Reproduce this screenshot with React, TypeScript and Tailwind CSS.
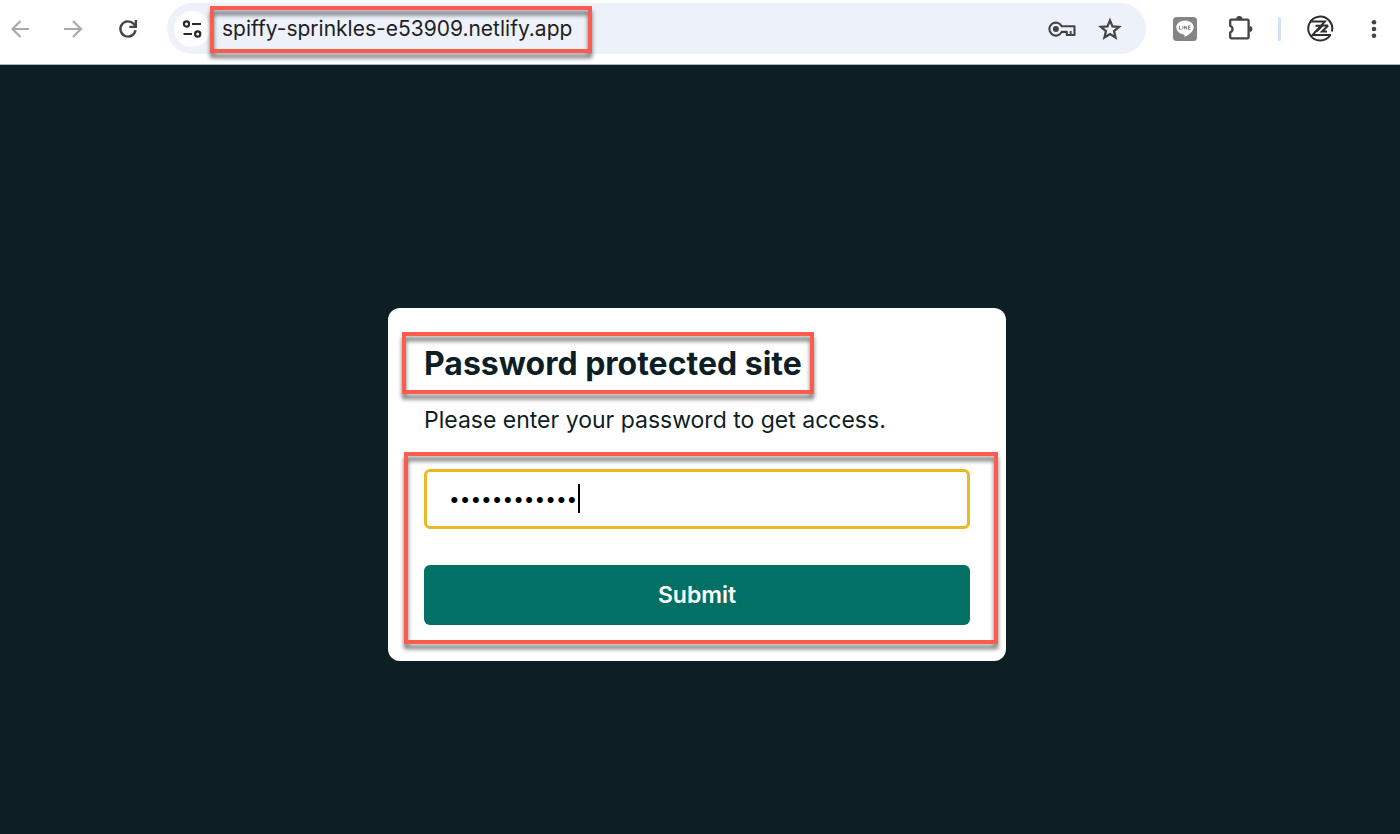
import React, { useState } from 'react';

const NAV_BUTTON = 'flex h-10 w-10 items-center justify-center';

const Highlight: React.FC<{ className: string }> = ({ className }) => (
  <span
    aria-hidden="true"
    className={`pointer-events-none absolute border-4 border-[#fc5c4d] drop-shadow-[0_5px_2px_rgba(0,0,0,0.55)] ${className}`}
  />
);

const BackIcon = () => (
  <svg width="20" height="20" viewBox="0 0 20 20" fill="none" stroke="#a9a9a9" strokeWidth="2.2">
    <path d="M19 10H3M10.500 2L2.500 10l8 8" />
  </svg>
);

const ForwardIcon = () => (
  <svg width="20" height="20" viewBox="0 0 20 20" fill="none" stroke="#a9a9a9" strokeWidth="2.2">
    <path d="M0 10h16.500M9 2l8 8-8 8" />
  </svg>
);

const ReloadIcon = () => (
  <svg width="20" height="20" viewBox="0 0 20 20" fill="none" stroke="#444" strokeWidth="2.400">
    <path d="M17.500 11.300A7.600 7.600 0 1 1 15.500 4.700L17.500 7" />
    <path d="M17.900 1v6.900h-6.500" />
  </svg>
);

const SiteSettingsIcon = () => (
  <svg width="20" height="20" viewBox="0 0 20 20" fill="none" stroke="#26282b" strokeWidth="2.2">
    <circle cx="4.500" cy="5" r="2.600" />
    <path d="M10 5h9M1.500 15h8.500" />
    <circle cx="15.700" cy="15" r="2.600" />
  </svg>
);

const KeyIcon = () => (
  <svg width="28" height="18" viewBox="0 0 28 18" fill="none" stroke="#444" strokeWidth="2.100">
    <path d="M13.700 6.300H26.500V15H18.800V11.900H13.700A6.500 6.500 0 1 1 13.700 6.300z" strokeLinejoin="round" />
    <path d="M22.700 11V15" strokeWidth="1.800" />
    <circle cx="7.900" cy="9.100" r="3" fill="#444" stroke="none" />
  </svg>
);

const StarIcon = () => (
  <svg width="24" height="24" viewBox="0 0 24 24" fill="none" stroke="#444" strokeWidth="2.200">
    <path d="M12 3.300l2.500 6.100 6.600.5-5.100 4.200 1.600 6.400-5.600-3.500-5.600 3.500 1.600-6.400-5.100-4.200 6.600-.5z" />
  </svg>
);

const LineIcon = () => (
  <svg width="24" height="24" viewBox="0 0 24 24">
    <rect width="24" height="24" rx="3.500" fill="#858585" />
    <path d="M12 3.500c-4.900 0-8.700 3.100-8.700 7 0 3.500 3.100 6.400 7.300 6.900 1.200.2.900 1.200.7 2.700 3.500-1.800 9.400-5.200 9.400-9.600 0-3.900-3.900-7-8.700-7z" fill="#fff" />
    <path d="M6.500 8.900v3.400h2M9.900 8.900v3.400M11.500 12.300V8.900l2.200 3.400V8.900M17.500 8.900h-2v3.400h2M15.500 10.600h1.800" fill="none" stroke="#858585" strokeWidth="1" />
  </svg>
);

const ExtensionsIcon = () => (
  <svg width="26" height="26" viewBox="0 0 26 26">
    <path
      d="M4.200 3.700H20.600a1 1 0 0 1 1 1V21.300a1 1 0 0 1-1 1H4.200a1 1 0 0 1-1-1v-4.900a3.500 3.500 0 0 0 0-6.600V4.700a1 1 0 0 1 1-1z"
      fill="none"
      stroke="#444"
      strokeWidth="2.300"
      strokeLinejoin="round"
    />
    <path d="M9.200 3.200a3.100 3.100 0 0 1 6.200 0zM22.400 10a3 3 0 0 1 0 6z" fill="#444" />
  </svg>
);

const ProfileIcon = () => (
  <svg width="28" height="28" viewBox="0 0 28 28" fill="none" stroke="#2f2f2f" strokeWidth="2">
    <path d="M24.200 20.300A12 12 0 1 1 25.900 16.500" />
    <path d="M4 6.600H18.800L6.500 20H25M9.500 10.700h6M22.200 10.500h-5.500L10.500 16.500M22.200 10.500L16 16.500h5" />
  </svg>
);

const MenuIcon = () => (
  <svg width="6" height="20" viewBox="0 0 6 20" fill="#444">
    <circle cx="3" cy="3.200" r="2.300" />
    <circle cx="3" cy="10" r="2.300" />
    <circle cx="3" cy="16.800" r="2.300" />
  </svg>
);

const BrowserBar: React.FC = () => {
  const [url, setUrl] = useState('spiffy-sprinkles-e53909.netlify.app');

  return (
    <header className="flex h-[65px] items-start border-b border-[#b5b8ba] bg-white pt-[3px]">
      <nav className="flex h-[51px] items-center gap-3.5">
        <button type="button" aria-label="Back" className={NAV_BUTTON}><BackIcon /></button>
        <button type="button" aria-label="Forward" className={NAV_BUTTON}><ForwardIcon /></button>
        <button type="button" aria-label="Reload" className={NAV_BUTTON}><ReloadIcon /></button>
      </nav>

      <div className="ml-[19px] flex h-[51px] min-w-0 flex-1 items-center rounded-full bg-[#edf1fa] pr-4 pl-[7px]">
        <button type="button" aria-label="Site information" className="flex h-9 w-9 shrink-0 items-center justify-center rounded-full bg-white">
          <SiteSettingsIcon />
        </button>
        <div className="relative w-[382px]">
          <input
            type="text"
            aria-label="Address"
            value={url}
            onChange={(e) => setUrl(e.target.value)}
            className="block h-12 w-full bg-transparent px-3 text-[21px] text-[#1f2023] outline-none"
          />
          <Highlight className="inset-x-0 top-px bottom-0" />
        </div>
        <div className="ml-auto flex gap-2">
          <button type="button" aria-label="Passwords" className={NAV_BUTTON}><KeyIcon /></button>
          <button type="button" aria-label="Bookmark" className={NAV_BUTTON}><StarIcon /></button>
        </div>
      </div>

      <div className="ml-[19px] flex h-[51px] items-center pr-1.5">
        <button type="button" aria-label="LINE" className={NAV_BUTTON}><LineIcon /></button>
        <button type="button" aria-label="Extensions" className={`ml-[15px] ${NAV_BUTTON}`}><ExtensionsIcon /></button>
        <span className="mr-[19px] ml-[18px] h-6 w-[3px] rounded-full bg-[#d3e2fb]" />
        <button type="button" aria-label="Profile" className={NAV_BUTTON}><ProfileIcon /></button>
        <button type="button" aria-label="Menu" className={`ml-3.5 ${NAV_BUTTON}`}><MenuIcon /></button>
      </div>
    </header>
  );
};

const PasswordCard: React.FC = () => {
  const [password, setPassword] = useState('sprinkles123');

  return (
    <section className="w-full max-w-[618px] rounded-xl bg-white p-9 text-[#0e1e25]">
      <div className="relative w-fit">
        <h1 className="text-[32px] leading-10 font-bold">Password protected site</h1>
        <Highlight className="-top-3 -right-3 -bottom-2.5 -left-[22px]" />
      </div>
      <p className="mt-[17px] text-[23px] leading-[38px]">Please enter your password to get access.</p>

      <form className="relative mt-[30px] flex flex-col gap-9" onSubmit={(e) => e.preventDefault()}>
        <div className="relative">
          <input
            type="password"
            aria-label="Password"
            value={password}
            onChange={(e) => setPassword(e.target.value)}
            className="block h-[60px] w-full rounded-md border-[3px] border-[#e9b824] px-[22px] text-[19px] text-black caret-transparent outline-none"
          />
          <span className="absolute top-[15px] left-[154px] h-[29px] w-0.5 bg-black" />
        </div>
        <button type="submit" className="h-[60px] rounded-md bg-[#027065] text-[23px] font-semibold text-white">
          Submit
        </button>
        <Highlight className="-top-[17px] -right-7 -bottom-[19px] -left-5" />
      </form>
    </section>
  );
};

const App: React.FC = () => {
  return (
    <div className="flex min-h-screen flex-col bg-[#0e1e25] font-['Inter',sans-serif]">
      <BrowserBar />
      <main className="flex flex-1 items-start justify-center pt-[243px] pr-1.5">
        <PasswordCard />
      </main>
    </div>
  );
};

export default App;
